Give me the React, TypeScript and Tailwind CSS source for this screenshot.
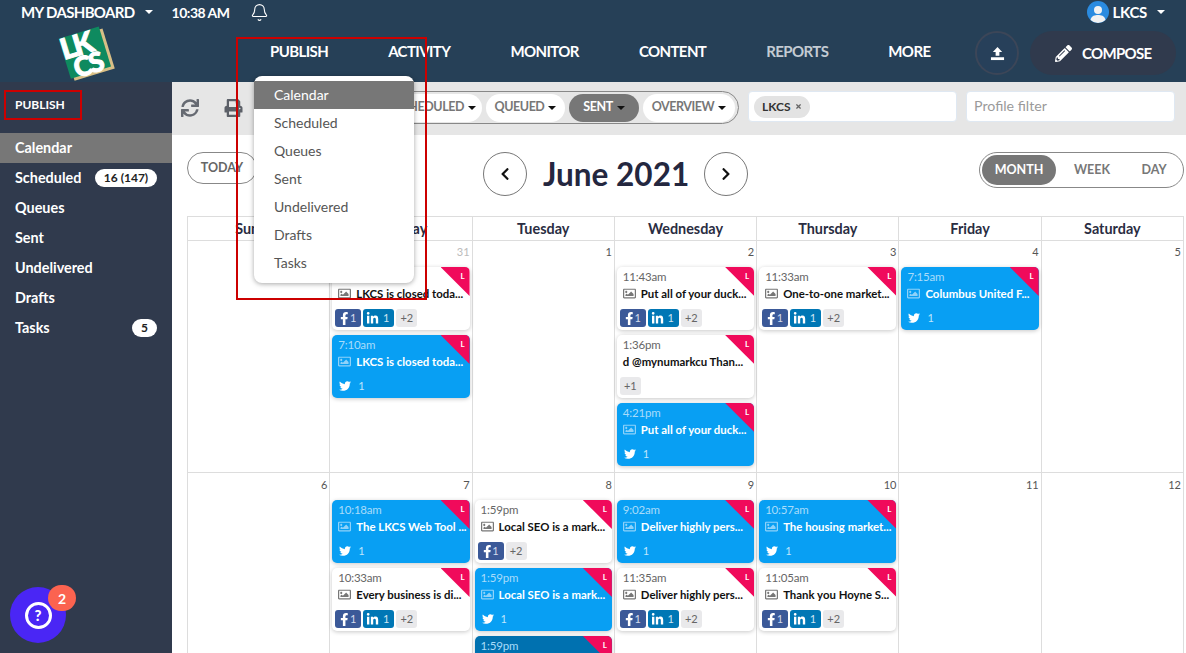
import React from "react";
import { FaFacebookF, FaLinkedinIn, FaTwitter, FaPrint, FaSync, FaRegImage, FaPencilAlt, FaTimes, FaChevronLeft, FaChevronRight } from "react-icons/fa";
import { Bell } from "lucide-react";

const Caret = ({ className = "" }: { className?: string }) => (
  <span className={`inline-block w-0 h-0 border-x-[4px] border-x-transparent border-t-[4px] ${className}`} />
);

type CardT = { t: string; title: string; kind: "w" | "b" | "d"; fb?: boolean; li?: boolean; more?: string; noImg?: boolean };

const Card = ({ c }: { c: CardT }) => {
  const bg = c.kind === "w" ? "bg-white" : c.kind === "b" ? "bg-[#089ff3]" : "bg-[#0071b0]";
  const timeC = c.kind === "w" ? "text-[#666666]" : "text-[#a8dcfa]";
  const titleC = c.kind === "w" ? "text-[#111111]" : "text-white";
  const imgC = c.kind === "w" ? "text-[#777777]" : "text-[#8fd2f9]";
  return (
    <div className={`relative h-[63px] rounded-[5px] overflow-hidden shadow-[0_1px_4px_rgba(0,0,0,0.22)] ${bg}`}>
      <div className="h-[42px] pl-[6px] pt-[2px]">
        <div className={`text-[11.5px] leading-[15px] font-normal tracking-[-0.2px] ${timeC}`}>{c.t}</div>
        <div className="flex items-center h-[19px] gap-[5px]">
          {!c.noImg && <FaRegImage className={`w-[13px] h-[13px] shrink-0 ${imgC}`} />}
          <span className={`text-[11.4px] font-bold whitespace-nowrap ${titleC}`}>{c.title}</span>
        </div>
      </div>
      <div className="flex items-center gap-[2px] pl-[3px] h-[18px]">
        {c.kind !== "w" && (
          <div className="flex items-center gap-[7px] pl-[4px] text-[#bfe6fc]">
            <FaTwitter className="w-[12px] h-[12px] text-white" />
            <span className="text-[11px]">1</span>
          </div>
        )}
        {c.fb && (
          <div className="flex items-center justify-between w-[26px] h-[18px] rounded-[3px] bg-[#3b5998] pl-[4px] pr-[5px] text-[#d5dcec]">
            <FaFacebookF className="w-[11px] h-[13px] text-white" />
            <span className="text-[11px]">1</span>
          </div>
        )}
        {c.li && (
          <div className="flex items-center justify-between w-[31px] h-[18px] rounded-[3px] bg-[#0077b5] pl-[3px] pr-[5px] text-[#cfe5f2]">
            <FaLinkedinIn className="w-[13px] h-[13px] text-white" />
            <span className="text-[11px]">1</span>
          </div>
        )}
        {c.more && (
          <div className="flex items-center justify-center w-[21px] h-[18px] rounded-[3px] bg-[#e9e9eb] text-[11px] text-[#666666]">{c.more}</div>
        )}
      </div>
      <div className="absolute top-0 right-0 w-[29px] h-[29px] bg-[#f00a5b] [clip-path:polygon(0_0,100%_0,100%_100%)]" />
      <span className="absolute top-[2px] right-[5px] text-[8px] leading-[14px] font-bold text-white">L</span>
    </div>
  );
};

const social = { fb: true, li: true, more: "+2" };

const weeks: { d: string; muted?: boolean; cards: CardT[] }[][] = [
  [
    { d: "", cards: [] },
    {
      d: "31",
      muted: true,
      cards: [
        { t: "7:00am", title: "LKCS is closed toda...", kind: "w", ...social },
        { t: "7:10am", title: "LKCS is closed toda...", kind: "b" },
      ],
    },
    { d: "1", cards: [] },
    {
      d: "2",
      cards: [
        { t: "11:43am", title: "Put all of your duck...", kind: "w", ...social },
        { t: "1:36pm", title: "d @mynumarkcu Than...", kind: "w", more: "+1", noImg: true },
        { t: "4:21pm", title: "Put all of your duck...", kind: "b" },
      ],
    },
    { d: "3", cards: [{ t: "11:33am", title: "One-to-one market...", kind: "w", ...social }] },
    { d: "4", cards: [{ t: "7:15am", title: "Columbus United F...", kind: "b" }] },
    { d: "5", cards: [] },
  ],
  [
    { d: "6", cards: [] },
    {
      d: "7",
      cards: [
        { t: "10:18am", title: "The LKCS Web Tool ...", kind: "b" },
        { t: "10:33am", title: "Every business is di...", kind: "w", ...social },
      ],
    },
    {
      d: "8",
      cards: [
        { t: "1:59pm", title: "Local SEO is a mark...", kind: "w", fb: true, more: "+2" },
        { t: "1:59pm", title: "Local SEO is a mark...", kind: "b" },
        { t: "1:59pm", title: "Local SEO is a mark...", kind: "d" },
      ],
    },
    {
      d: "9",
      cards: [
        { t: "9:02am", title: "Deliver highly pers...", kind: "b" },
        { t: "11:35am", title: "Deliver highly pers...", kind: "w", ...social },
      ],
    },
    {
      d: "10",
      cards: [
        { t: "10:57am", title: "The housing market...", kind: "b" },
        { t: "11:05am", title: "Thank you Hoyne S...", kind: "w", ...social },
      ],
    },
    { d: "11", cards: [] },
    { d: "12", cards: [] },
  ],
];

const days = ["Sunday", "Monday", "Tuesday", "Wednesday", "Thursday", "Friday", "Saturday"];
const side: [string, string?][] = [["Calendar"], ["Scheduled", "16 (147)"], ["Queues"], ["Sent"], ["Undelivered"], ["Drafts"], ["Tasks", "5"]];
const nav = ["PUBLISH", "ACTIVITY", "MONITOR", "CONTENT", "REPORTS", "MORE"];
const menu = ["Calendar", "Scheduled", "Queues", "Sent", "Undelivered", "Drafts", "Tasks"];

export default function App() {
  return (
    <div className="relative w-[1186px] h-[653px] overflow-hidden bg-white font-['Lato',sans-serif]">
      {/* Header */}
      <header className="h-[82px] bg-[#264057] text-white">
        <div className="flex items-center h-[24px] pl-[21px] pr-[21px]">
          <span className="text-[15px] font-bold tracking-[-0.65px]">MY DASHBOARD</span>
          <Caret className="ml-[10px] border-t-white" />
          <span className="ml-[19px] text-[14px] font-bold tracking-[-0.5px]">10:38 AM</span>
          <Bell className="ml-[20px] w-[19px] h-[19px]" strokeWidth={1.4} />
          <div className="ml-auto flex items-center">
            <svg viewBox="0 0 22 22" className="w-[22px] h-[22px]">
              <circle cx="11" cy="11" r="11" fill="#2a8be0" />
              <circle cx="11" cy="9" r="4" fill="#f2f2f2" />
              <path d="M3.5 19 C4.5 14.5 8 14 11 14 C14 14 17.5 14.5 18.5 19 A11 11 0 0 1 3.5 19Z" fill="#f2f2f2" />
            </svg>
            <span className="ml-[4px] text-[15px] font-bold tracking-[-0.3px]">LKCS</span>
            <Caret className="ml-[10px] border-t-white" />
          </div>
        </div>
        <div className="flex items-center h-[58px]">
          <div className="w-[270px] shrink-0 pl-[58px]">
            <svg viewBox="0 0 58 56" className="w-[58px] h-[56px] overflow-visible">
              <g transform="rotate(-17 29 28)">
                <rect x="9" y="9" width="42" height="42" fill="#d8bf86" />
                <rect x="6" y="6" width="42" height="42" fill="#0e8a5f" />
                <text x="5" y="28" fontSize="29" fontWeight="900" fill="#ffffff" stroke="#ffffff" strokeWidth="1" fontFamily="Lato, sans-serif" letterSpacing="-2">LK</text>
                <text x="12" y="49" fontSize="27" fontWeight="900" fill="#ffffff" stroke="#ffffff" strokeWidth="1" fontFamily="Lato, sans-serif" letterSpacing="-2">CS</text>
              </g>
            </svg>
          </div>
          <nav className="flex items-center gap-[60px] -mt-[4px]">
            {nav.map((n) => (
              <span key={n} className={`text-[15px] font-bold tracking-[-0.6px] ${n === "REPORTS" ? "text-[#c3cbd3]" : "text-white"}`}>{n}</span>
            ))}
          </nav>
          <div className="ml-auto flex items-center gap-[11px] pr-[10px]">
            <div className="flex items-center justify-center w-[44px] h-[44px] rounded-full border-2 border-[#3c4658] bg-[#27405a]">
              <svg viewBox="0 0 16 16" className="w-[15px] h-[15px]" fill="#ffffff">
                <path d="M8 1 L13 6.5 H10 V10.5 H6 V6.5 H3 Z" />
                <path d="M1 12 H15 V15 H1 Z" />
              </svg>
            </div>
            <div className="flex items-center w-[146px] h-[44px] rounded-full bg-[#303a4d] pl-[25px]">
              <FaPencilAlt className="w-[17px] h-[17px]" />
              <span className="ml-[10px] text-[15px] font-bold tracking-[-0.7px]">COMPOSE</span>
            </div>
          </div>
        </div>
      </header>

      <div className="flex h-[571px]">
        {/* Sidebar */}
        <aside className="w-[172px] shrink-0 bg-[#303a4d] text-white">
          <div className="h-[51px] pl-[15px] pt-[15px] text-[12px] leading-[16px] font-bold">PUBLISH</div>
          <ul>
            {side.map(([s, b], i) => (
              <li key={s} className={`flex items-center h-[30px] pl-[15px] pr-[15px] text-[14.4px] font-bold ${i === 0 ? "bg-[#777777]" : ""}`}>
                <span className="-mt-[1px]">{s}</span>
                {b && (
                  <span className={`ml-auto flex items-center justify-center h-[18px] rounded-full bg-white text-[#222222] text-[12px] font-bold ${b === "5" ? "w-[25px]" : "w-[62px]"}`}>{b}</span>
                )}
              </li>
            ))}
          </ul>
        </aside>

        {/* Main */}
        <main className="flex-1 min-w-0">
          <div className="flex items-start h-[53px] bg-[#e6e6e6] pt-[9px]">
            <FaSync className="ml-[9px] mt-[8px] w-[18px] h-[18px] text-[#666a72]" />
            <FaPrint className="ml-[25px] mt-[8px] w-[19px] h-[18px] text-[#5c6068]" />
            <div className="ml-[13px] flex items-center justify-end gap-[4px] w-[483px] h-[33px] border border-[#888888] rounded-full pr-[3px] text-[12.5px] font-bold text-[#777777] tracking-[-0.45px]">
              <span className="flex items-center justify-end gap-[4px] w-[116px] h-[28px] rounded-full bg-white pr-[6px]">SCHEDULED<Caret className="border-t-[#111111]" /></span>
              <span className="flex items-center justify-center gap-[4px] w-[79px] h-[28px] rounded-full bg-white">QUEUED<Caret className="border-t-[#111111]" /></span>
              <span className="flex items-center justify-center gap-[4px] w-[70px] h-[28px] rounded-full bg-[#777777] text-white">SENT<Caret className="border-t-[#111111]" /></span>
              <span className="flex items-center justify-center gap-[4px] w-[92px] h-[28px] rounded-full bg-white">OVERVIEW<Caret className="border-t-[#111111]" /></span>
            </div>
            <div className="ml-[9px] flex items-center w-[209px] h-[31px] rounded-[4px] bg-white border border-[#dfe8f2] pl-[5px]">
              <span className="flex items-center gap-[4px] h-[22px] px-[8px] rounded-full bg-[#e3e3e3] text-[12px] font-bold text-[#333333]">LKCS<FaTimes className="w-[7px] h-[7px] text-[#666666]" /></span>
            </div>
            <div className="ml-[9px] flex items-center w-[209px] h-[31px] rounded-[4px] bg-white border border-[#dfe8f2] pl-[7px] pb-[2px] text-[14.2px] text-[#9a9a9a]">Profile filter</div>
          </div>

          <div className="pl-[15px] pr-[2px]">
            <div className="flex items-start h-[81px] pt-[17px]">
              <div className="flex items-center justify-center w-[70px] h-[32px] rounded-full border border-[#888888] text-[12.5px] font-bold text-[#666666]">TODAY</div>
              <div className="flex items-center ml-[226px] gap-[16px]">
                <div className="flex items-center justify-center w-[44px] h-[44px] rounded-full border border-[#777777]"><FaChevronLeft className="w-[14px] h-[14px] text-[#111111]" /></div>
                <span className="text-[31.5px] leading-[44px] font-bold text-[#24273f] w-[145px] whitespace-nowrap">June 2021</span>
                <div className="flex items-center justify-center w-[44px] h-[44px] rounded-full border border-[#777777]"><FaChevronRight className="w-[14px] h-[14px] text-[#111111]" /></div>
              </div>
              <div className="ml-auto flex items-center w-[205px] h-[36px] rounded-full border border-[#888888] pl-[2px] text-[12.5px] font-bold text-[#777777]">
                <span className="flex items-center justify-center w-[74px] h-[30px] rounded-full bg-[#777777] text-white">MONTH</span>
                <span className="flex items-center justify-center w-[72px]">WEEK</span>
                <span className="flex items-center justify-center w-[52px]">DAY</span>
              </div>
            </div>

            <div className="border-l border-t border-[#dddddd]">
              <div className="grid grid-cols-7 h-[23px]">
                {days.map((d) => (
                  <div key={d} className="flex items-center justify-center border-r border-b border-[#dddddd] pt-[1px] text-[14.4px] font-bold text-[#2a2d42]">{d}</div>
                ))}
              </div>
              {weeks.map((w, i) => (
                <div key={i} className={`grid grid-cols-7 ${i === 0 ? "h-[233px]" : "h-[232px]"}`}>
                  {w.map((c, j) => (
                    <div key={j} className="border-r border-b border-[#dddddd] px-[2px]">
                      <div className={`h-[27px] pt-[5px] text-right text-[11px] leading-[14px] ${c.muted ? "text-[#bbbbbb]" : "text-[#555555]"}`}>{c.d}</div>
                      <div className="flex flex-col gap-[5px]">
                        {c.cards.map((x, k) => <Card key={k} c={x} />)}
                      </div>
                    </div>
                  ))}
                </div>
              ))}
            </div>
          </div>
        </main>
      </div>

      {/* Dropdown over content */}
      <div className="absolute left-[254px] top-[76px] w-[160px] h-[207px] pt-[5px] rounded-[8px] bg-white shadow-[0_1px_5px_rgba(0,0,0,0.35)] text-[14px] text-[#555555]">
        {menu.map((m, i) => (
          <div key={m} className={`flex items-center h-[28px] pl-[20px] pb-[2px] ${i === 0 ? "bg-[#777777] text-white" : ""}`}>{m}</div>
        ))}
      </div>

      {/* Annotation boxes */}
      <div className="absolute left-[236px] top-[37px] w-[191px] h-[263px] border-2 border-[#cc0000] pointer-events-none" />
      <div className="absolute left-[4px] top-[90px] w-[78px] h-[30px] border-2 border-[#cc0000] pointer-events-none" />

      {/* Help bubble */}
      <div className="absolute left-[10px] top-[587px] flex items-center justify-center w-[56px] h-[56px] rounded-full bg-[#4a26f5]">
        <div className="flex items-center justify-center w-[27px] h-[27px] rounded-full border-[3px] border-white text-white text-[15px] font-black leading-none">?</div>
      </div>
      <div className="absolute left-[48px] top-[585px] flex items-center justify-center w-[28px] h-[26px] rounded-full bg-[#fb6350] text-white text-[14px] font-bold">2</div>
    </div>
  );
}
